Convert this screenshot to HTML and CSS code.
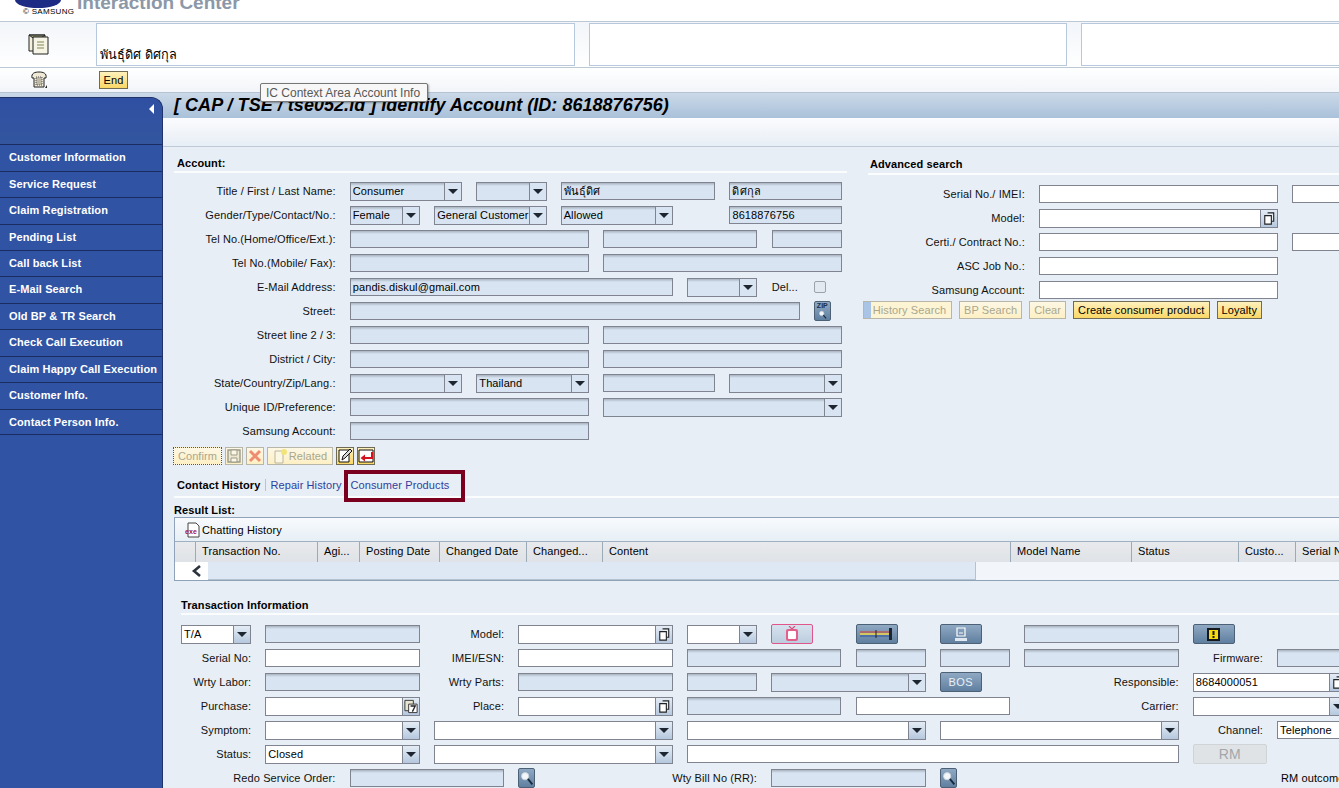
FILE: index.html
```html
<!DOCTYPE html>
<html lang="th">

<head>
    <meta charset="UTF-8">
    <title>Interaction Center</title>
    <link rel="stylesheet" href="styles.css">
</head>

<body>
    <!-- shared icons -->
    <svg class="defs" width="0" height="0">
        <symbol id="copy" viewBox="0 0 17 18">
            <path d="M7 3.5h6.5v9H11" fill="#e8eef5" stroke="#222" stroke-width="1.2"/>
            <path d="M4 6.5h7v9H4z" fill="#fff" stroke="#222" stroke-width="1.2"/>
        </symbol>
        <symbol id="find" viewBox="0 0 17 20">
            <circle cx="7" cy="8" r="4" fill="#f4f7fa" stroke="#c9d5e0"/>
            <path d="M10 11l5 6" stroke="#16283a" stroke-width="2"/>
        </symbol>
    </svg>

    <header class="masthead">
        <div class="logo">
            <svg class="logo-oval" width="50" height="8" viewBox="0 0 50 8"><ellipse cx="25" cy="0" rx="23" ry="8" fill="#1c2b83"/></svg>
            <span class="logo-name">© SAMSUNG</span>
        </div>
        <div class="app-name">Interaction Center</div>
    </header>

    <section class="context">
        <div class="context-icon">
            <svg width="22" height="21" viewBox="0 0 22 21">
                <path d="M1 1h16v16H1z" fill="#f4f1dc" stroke="#222"/>
                <path d="M1 1l8 6 8-6z" fill="#8f9171" stroke="#222"/>
                <path d="M5 3h15v17H5z" fill="#f6f4e4" stroke="#222"/>
                <path d="M9 8h7M9 11h7M9 14h7" stroke="#a9ab84" stroke-width="1.6"/>
            </svg>
        </div>
        <div class="context-box"><span>พันธุ์ดิศ ดิศกุล</span></div>
        <div class="context-box"></div>
        <div class="context-box"></div>
    </section>

    <section class="callbar">
        <div class="context-icon">
            <svg width="18" height="18" viewBox="0 0 18 18">
                <path d="M2 7C1 2 5 1 9 1s8 1 7 6l-2 0v9H4V7z" fill="#efe9d6" stroke="#222"/>
                <path d="M6 6h6v8H6z" fill="#bdb9a6" stroke="#555" stroke-dasharray="1 1"/>
                <path d="M15 17l2-3v3z" fill="#222"/>
            </svg>
        </div>
        <button class="btn end">End</button>
    </section>

    <div class="tooltip">IC Context Area Account Info</div>

    <div class="shell">
        <nav class="side">
            <div class="side-top"><i class="collapse"></i></div>
            <a>Customer Information</a>
            <a>Service Request</a>
            <a>Claim Registration</a>
            <a>Pending List</a>
            <a>Call back List</a>
            <a>E-Mail Search</a>
            <a>Old BP &amp; TR Search</a>
            <a>Check Call Execution</a>
            <a>Claim Happy Call Execution</a>
            <a>Customer Info.</a>
            <a>Contact Person Info.</a>
        </nav>

        <main class="content">
            <h1 class="title">[ CAP / TSE / tse052.id ] Identify Account (ID: 8618876756)</h1>
            <div class="band"></div>

            <div class="upper">
                <section class="account">
                    <h2 class="head">Account:</h2>
                    <div class="rows">
                        <div class="row">
                            <label class="lbl s4">Title / First / Last Name:</label>
                            <div class="fld ro sel s3">Consumer<i class="drop"></i></div>
                            <div class="fld ro sel s2"><i class="drop"></i></div>
                            <div class="fld ro s4">พันธุ์ดิศ</div>
                            <div class="fld ro s3">ดิศกุล</div>
                        </div>
                        <div class="row">
                            <label class="lbl s4">Gender/Type/Contact/No.:</label>
                            <div class="fld ro sel s2">Female<i class="drop"></i></div>
                            <div class="fld ro sel s3">General Customer<i class="drop"></i></div>
                            <div class="fld ro sel s3">Allowed<i class="drop"></i></div>
                            <i class="s1"></i>
                            <div class="fld ro s3">8618876756</div>
                        </div>
                        <div class="row">
                            <label class="lbl s4">Tel No.(Home/Office/Ext.):</label>
                            <div class="fld ro s6"></div>
                            <div class="fld ro s4"></div>
                            <div class="fld ro s2"></div>
                        </div>
                        <div class="row">
                            <label class="lbl s4">Tel No.(Mobile/ Fax):</label>
                            <div class="fld ro s6"></div>
                            <div class="fld ro s6"></div>
                        </div>
                        <div class="row">
                            <label class="lbl s4">E-Mail Address:</label>
                            <div class="fld ro s8">pandis.diskul@gmail.com</div>
                            <div class="fld ro sel s2"><i class="drop"></i></div>
                            <span class="del s1">Del...</span>
                            <i class="check s1"></i>
                        </div>
                        <div class="row">
                            <label class="lbl s4">Street:</label>
                            <div class="fld ro s11"></div>
                            <button class="ibtn zip s1">ZIP<svg width="13" height="11" viewBox="0 0 17 20"><use href="#find"/></svg></button>
                        </div>
                        <div class="row">
                            <label class="lbl s4">Street line 2 / 3:</label>
                            <div class="fld ro s6"></div>
                            <div class="fld ro s6"></div>
                        </div>
                        <div class="row">
                            <label class="lbl s4">District / City:</label>
                            <div class="fld ro s6"></div>
                            <div class="fld ro s6"></div>
                        </div>
                        <div class="row">
                            <label class="lbl s4">State/Country/Zip/Lang.:</label>
                            <div class="fld ro sel s3"><i class="drop"></i></div>
                            <div class="fld ro sel s3">Thailand<i class="drop"></i></div>
                            <div class="fld ro s3"></div>
                            <div class="fld ro sel s3"><i class="drop"></i></div>
                        </div>
                        <div class="row">
                            <label class="lbl s4">Unique ID/Preference:</label>
                            <div class="fld ro s6"></div>
                            <div class="fld ro sel s6"><i class="drop"></i></div>
                        </div>
                        <div class="row">
                            <label class="lbl s4">Samsung Account:</label>
                            <div class="fld ro s6"></div>
                        </div>
                    </div>
                </section>

                <section class="advanced">
                    <h2 class="head">Advanced search</h2>
                    <div class="rows">
                        <div class="row">
                            <label class="lbl s4">Serial No./ IMEI:</label>
                            <div class="fld s6"></div>
                            <div class="fld s6"></div>
                        </div>
                        <div class="row">
                            <label class="lbl s4">Model:</label>
                            <div class="fld sel s6"><i class="drop pick"><svg width="17" height="18"><use href="#copy"/></svg></i></div>
                        </div>
                        <div class="row">
                            <label class="lbl s4">Certi./ Contract No.:</label>
                            <div class="fld s6"></div>
                            <div class="fld s6"></div>
                        </div>
                        <div class="row">
                            <label class="lbl s4">ASC Job No.:</label>
                            <div class="fld s6"></div>
                        </div>
                        <div class="row">
                            <label class="lbl s4">Samsung Account:</label>
                            <div class="fld s6"></div>
                        </div>
                    </div>
                    <div class="adv-actions">
                        <button class="btn off hist">History Search</button>
                        <button class="btn off">BP Search</button>
                        <button class="btn off">Clear</button>
                        <button class="btn">Create consumer product</button>
                        <button class="btn">Loyalty</button>
                    </div>
                </section>
            </div>

            <div class="actions">
                <button class="btn off confirm">Confirm</button>
                <button class="btn off square">
                    <svg width="14" height="14" viewBox="0 0 14 14"><path d="M1 1h12v12H1z" fill="#ece8cf" stroke="#9b9b8c" stroke-width="1.4"/><path d="M4 1h6v5H4zM4 9h6v4H4z" fill="#fbf7e2" stroke="#9b9b8c"/></svg>
                </button>
                <button class="btn off square">
                    <svg width="14" height="14" viewBox="0 0 14 14"><path d="M2 2l10 10M12 2L2 12" stroke="#ee8d70" stroke-width="3"/></svg>
                </button>
                <button class="btn off related">
                    <svg width="16" height="16" viewBox="0 0 16 16"><path d="M2 3h8v12H2z" fill="#fbf7e2" stroke="#b9b69e"/><circle cx="11" cy="4" r="3" fill="#f3e47a"/></svg>Related
                </button>
                <button class="btn square">
                    <svg width="16" height="16" viewBox="0 0 16 16"><path d="M2 2h10v12H2z" fill="#fff" stroke="#111"/><path d="M5 12l1-4 7-7 2 2-7 7z" fill="#d9d9d9" stroke="#111"/></svg>
                </button>
                <button class="btn square">
                    <svg width="16" height="14" viewBox="0 0 16 14"><path d="M1 1h14v12H1z" fill="#fff" stroke="#111"/><path d="M13 3v5H7V5.5L2.500 9 7 12.500V10h8V3z" fill="#d6121f"/></svg>
                </button>
            </div>

            <div class="tabs">
                <a class="tab on">Contact History</a>
                <a class="tab">Repair History</a>
                <a class="tab third">Consumer Products</a>
                <span class="callout"></span>
            </div>

            <h3 class="result-title">Result List:</h3>
            <div class="result">
                <div class="result-tools">
                    <svg width="16" height="16" viewBox="0 0 16 16">
                        <path d="M3 1h8l3 3v11H3z" fill="#fff" stroke="#444"/>
                        <text x="0" y="12" class="exe">exe</text>
                    </svg>
                    Chatting History
                </div>
                <div class="cols">
                    <span></span>
                    <span>Transaction No.</span>
                    <span>Agi...</span>
                    <span>Posting Date</span>
                    <span>Changed Date</span>
                    <span>Changed...</span>
                    <span>Content</span>
                    <span>Model Name</span>
                    <span>Status</span>
                    <span>Custo...</span>
                    <span>Serial No</span>
                </div>
                <div class="scroll">
                    <span class="scroll-left">
                        <svg width="12" height="12" viewBox="0 0 12 12"><path d="M9 1L3 6l6 5" fill="none" stroke="#2c3440" stroke-width="2.600"/></svg>
                    </span>
                    <span class="scroll-track"></span>
                </div>
            </div>

            <section class="transaction">
                <h2 class="head">Transaction Information</h2>
                <div class="rows">
                    <div class="row">
                        <div class="fld sel s2">T/A<i class="drop"></i></div>
                        <div class="fld ro s4"></div>
                        <label class="lbl s2">Model:</label>
                        <div class="fld sel s4"><i class="drop pick"><svg width="17" height="18"><use href="#copy"/></svg></i></div>
                        <div class="fld sel s2"><i class="drop"></i></div>
                        <button class="ibtn wide tv s2">
                            <svg width="16" height="16" viewBox="0 0 16 16"><path d="M5 0l3 3 3-3" fill="none" stroke="#d9517f" stroke-width="1.200"/><rect x="2" y="3" width="12" height="12" rx="2" fill="#e4608c"/><rect x="4" y="5" width="8" height="8" rx="1" fill="#fff"/></svg>
                        </button>
                        <button class="ibtn wide s2">
                            <svg width="34" height="12" viewBox="0 0 34 12"><path d="M0 4h30" stroke="#d43c2c"/><path d="M0 6h30" stroke="#f2d84a" stroke-width="1.500"/><path d="M0 8h30" stroke="#2d4fa0"/><path d="M16 2v8" stroke="#222"/><path d="M29 0h3v12h-3z" fill="#1b2630"/></svg>
                        </button>
                        <button class="ibtn wide s2">
                            <svg width="14" height="15" viewBox="0 0 14 15"><path d="M3 1h8v8H3z" fill="none" stroke="#fff" stroke-width="1.200"/><path d="M5 6h4" stroke="#fff"/><path d="M1 11h12v3H1z" fill="#dfe8f0"/></svg>
                        </button>
                        <div class="fld ro s4"></div>
                        <button class="ibtn wide s2">
                            <svg width="13" height="13" viewBox="0 0 13 13"><path d="M0 0h13v13H0z" fill="#16181c"/><path d="M2 2h9v9H2z" fill="#f5d90a"/><path d="M5.500 3h2v4h-2zM5.500 8h2v2h-2z" fill="#16181c"/></svg>
                        </button>
                    </div>
                    <div class="row">
                        <label class="lbl s2">Serial No:</label>
                        <div class="fld s4"></div>
                        <label class="lbl s2">IMEI/ESN:</label>
                        <div class="fld s4"></div>
                        <div class="fld ro s4"></div>
                        <div class="fld ro s2"></div>
                        <div class="fld ro s2"></div>
                        <div class="fld ro s4"></div>
                        <label class="lbl s2">Firmware:</label>
                        <div class="fld ro s4"></div>
                    </div>
                    <div class="row">
                        <label class="lbl s2">Wrty Labor:</label>
                        <div class="fld ro s4"></div>
                        <label class="lbl s2">Wrty Parts:</label>
                        <div class="fld ro s4"></div>
                        <div class="fld ro s2"></div>
                        <div class="fld ro sel s4"><i class="drop"></i></div>
                        <button class="ibtn wide bos s2">BOS</button>
                        <label class="lbl s4">Responsible:</label>
                        <div class="fld sel s4">8684000051<i class="drop pick"><svg width="17" height="18"><use href="#copy"/></svg></i></div>
                    </div>
                    <div class="row">
                        <label class="lbl s2">Purchase:</label>
                        <div class="fld sel s4"><i class="drop pick">
                            <svg width="17" height="18" viewBox="0 0 17 18"><path d="M2 3h9v11H2z" fill="#e8e4d0" stroke="#333"/><path d="M6 7h9v9H6z" fill="#fff" stroke="#333"/><path d="M8 9h5l-3 6" fill="none" stroke="#222" stroke-width="1.400"/></svg>
                        </i></div>
                        <label class="lbl s2">Place:</label>
                        <div class="fld sel s4"><i class="drop pick"><svg width="17" height="18"><use href="#copy"/></svg></i></div>
                        <div class="fld ro s4"></div>
                        <div class="fld s4"></div>
                        <label class="lbl s4">Carrier:</label>
                        <div class="fld sel s4"><i class="drop"></i></div>
                    </div>
                    <div class="row">
                        <label class="lbl s2">Symptom:</label>
                        <div class="fld sel s4"><i class="drop"></i></div>
                        <div class="fld sel s6"><i class="drop"></i></div>
                        <div class="fld sel s6"><i class="drop"></i></div>
                        <div class="fld sel s6"><i class="drop"></i></div>
                        <label class="lbl s2">Channel:</label>
                        <div class="fld s4">Telephone</div>
                    </div>
                    <div class="row">
                        <label class="lbl s2">Status:</label>
                        <div class="fld sel s4">Closed<i class="drop"></i></div>
                        <div class="fld sel s6"><i class="drop"></i></div>
                        <div class="fld s12"></div>
                        <button class="rm s2">RM</button>
                    </div>
                    <div class="row">
                        <label class="lbl s4">Redo Service Order:</label>
                        <div class="fld ro s4"></div>
                        <button class="ibtn s1 lens"><svg width="17" height="20"><use href="#find"/></svg></button>
                        <i class="s3"></i>
                        <label class="lbl s2">Wty Bill No (RR):</label>
                        <div class="fld ro s4"></div>
                        <button class="ibtn s1 lens"><svg width="17" height="20"><use href="#find"/></svg></button>
                        <i class="s7"></i>
                        <label class="lbl-left s4">RM outcome</label>
                    </div>
                </div>
            </section>
        </main>
    </div>
</body>

</html>
```

FILE: styles.css
```css
/* General styles */
* {
    box-sizing: border-box;
    margin: 0;
    padding: 0;
}

:root {
    --page: #e7eef5;
    --field: #d8e4f2;
    --line: #7f8490;
    --navy: #3153a4;
}

html, body {
    width: 1339px;
    height: 788px;
    overflow: hidden;
}

body {
    position: relative;
    background: #fff;
    color: #000;
    font-family: "Liberation Sans", Arial, "Noto Sans", sans-serif;
    font-size: 11px;
    letter-spacing: 0.1px;
}

.defs {
    position: absolute;
}

/* Top of the page */
.masthead {
    display: flex;
    height: 22px;
    overflow: hidden;
    border-bottom: 1px solid #bcc8d4;
}

.logo {
    display: flex;
    flex-direction: column;
    width: 77px;
    padding-left: 13px;
}

.logo-oval {
    display: block;
    flex: none;
}

.logo-name {
    padding: 0 0 0 10px;
    font-size: 8px;
    letter-spacing: 0.3px;
    white-space: nowrap;
    line-height: 8px;
}

.app-name {
    margin-top: -8px;
    color: #8c98a8;
    font-size: 19px;
    font-weight: bold;
    letter-spacing: 0;
    line-height: 22px;
    white-space: nowrap;
}

.context {
    display: flex;
    gap: 14px;
    height: 46px;
    padding: 1px 0 1px 0;
    background: linear-gradient(#f2f5f9, #fff);
    border-bottom: 1px solid #bcc8d4;
}

.context-icon {
    display: flex;
    align-items: center;
    justify-content: center;
    flex: none;
    width: 82px;
    padding-right: 4px;
}

.context-box {
    display: flex;
    align-items: flex-end;
    flex: none;
    width: 478.5px;
    padding: 0 3px;
    background: #fff;
    border: 1px solid #b7c8dc;
    font-size: 12.7px;
    letter-spacing: 0;
}

.callbar {
    display: flex;
    align-items: center;
    gap: 17px;
    height: 24px;
    background: linear-gradient(#fff, #f2f5f9);
}

.tooltip {
    position: absolute;
    top: 83px;
    left: 260px;
    z-index: 5;
    width: 168px;
    height: 19px;
    padding-left: 5px;
    background: #f7f7f7;
    border: 1px solid #767676;
    border-radius: 2px;
    box-shadow: 1px 1px 2px rgba(0, 0, 0, 0.35);
    color: #575757;
    font-size: 12px;
    letter-spacing: 0;
    line-height: 19px;
    white-space: nowrap;
}

/* Sidebar and content */
.shell {
    display: flex;
    height: 696px;
    background: linear-gradient(#cbd9e8, #a8c0d9) 0 0 / 100% 26px no-repeat, var(--page);
    border-top: 1px solid #b5c3d2;
}

.side {
    flex: none;
    width: 163px;
    margin-top: 4px;
    background: var(--navy);
    border-top: 1px solid #1f3269;
    border-right: 1px solid #1f3269;
    border-top-right-radius: 12px;
}

.side-top {
    display: flex;
    justify-content: flex-end;
    height: 46.3px;
    padding: 6px 8px 0 0;
    background: linear-gradient(#2f50a2, #33569f);
    border-top-right-radius: 12px;
}

.collapse {
    width: 0;
    height: 0;
    border-top: 5px solid transparent;
    border-bottom: 5px solid transparent;
    border-right: 5px solid #fff;
}

.side a {
    display: block;
    height: 26.45px;
    padding-left: 9px;
    border-top: 1px solid #1b2c60;
    color: #fff;
    font-size: 11px;
    font-weight: bold;
    line-height: 25px;
    white-space: nowrap;
}

.side a:last-child {
    border-bottom: 1px solid #1b2c60;
}

.content {
    flex: 1;
    min-width: 0;
    overflow: hidden;
}

.title {
    height: 25px;
    padding-left: 11px;
    font-size: 18px;
    font-style: italic;
    font-weight: bold;
    letter-spacing: 0.035px;
    line-height: 24px;
    white-space: nowrap;
}

.band {
    height: 29px;
    background: linear-gradient(#fbfcfe, #e7eef5);
    border-bottom: 1px solid #bfcad6;
}

.upper {
    display: flex;
}

.account {
    flex: none;
    width: 684px;
    padding-left: 11px;
}

.advanced {
    flex: none;
    width: 492px;
    margin-left: 16px;
    padding-left: 5px;
}

.head {
    height: 26px;
    padding: 10px 0 0 3px;
    border-bottom: 2px solid #fbfcfd;
    font-size: 11px;
    font-weight: bold;
    line-height: 13px;
    white-space: nowrap;
}

.rows {
    margin: 6px 0 0 7px;
}

.advanced .head {
    height: 28px;
    padding: 11px 0 0 2px;
}

.advanced .rows {
    margin: 7px 0 0 2.400px;
}

/* Every form row sits on one grid of 28px tracks */
.row {
    display: grid;
    grid-template-columns: repeat(30, 28px);
    column-gap: 14.17px;
    align-items: center;
    height: 24px;
}

.account .row {
    column-gap: 14.2px;
}

.advanced .row {
    column-gap: 14.15px;
}

.s1 { grid-column: span 1; }
.s2 { grid-column: span 2; }
.s3 { grid-column: span 3; }
.s4 { grid-column: span 4; }
.s6 { grid-column: span 6; }
.s7 { grid-column: span 7; }
.s8 { grid-column: span 8; }
.s11 { grid-column: span 11; }
.s12 { grid-column: span 12; }

.lbl {
    display: flex;
    justify-content: flex-end;
    color: #111;
    white-space: nowrap;
}

.lbl-left {
    padding-left: 4px;
    white-space: nowrap;
}

.fld {
    position: relative;
    height: 18px;
    padding-left: 2px;
    overflow: hidden;
    background: #fff;
    border: 1px solid var(--line);
    line-height: 16px;
    white-space: nowrap;
}

.fld.ro {
    background: linear-gradient(#aab4c0, #d8e4f2 3px);
}

.fld.sel {
    height: 19px;
    padding-right: 18px;
    line-height: 17px;
}

/* Arrow part of a dropdown */
.drop {
    position: absolute;
    top: 0;
    right: 0;
    display: flex;
    align-items: center;
    justify-content: center;
    width: 17px;
    height: 17px;
    background: linear-gradient(#e4ecf5, #b6c8de);
    border-left: 1px solid var(--line);
}

.drop::after {
    content: "";
    width: 0;
    height: 0;
    border-top: 5px solid #1c2530;
    border-left: 5px solid transparent;
    border-right: 5px solid transparent;
}

.ro .drop {
    background: var(--field);
}

.drop.pick::after {
    display: none;
}

.del {
    color: #111;
    white-space: nowrap;
}

.check {
    width: 12px;
    height: 12px;
    background: #e2e9f1;
    border: 1px solid #9aa2ac;
    border-radius: 2px;
}

/* Button styles */
.btn {
    display: inline-flex;
    align-items: center;
    justify-content: center;
    height: 18px;
    padding: 0 4px;
    background: linear-gradient(#fff1bd, #fad765);
    border: 1px solid #6f6b55;
    color: #000;
    font-family: inherit;
    font-size: 11px;
    letter-spacing: inherit;
    white-space: nowrap;
}

.btn.off {
    background: linear-gradient(#fdf8e4, #fdf0c4);
    border-color: #b7b6a8;
    color: #a9a78f;
}

.btn.end {
    width: 29px;
    height: 18px;
    padding: 0;
}

.btn.hist {
    width: 89px;
    padding-left: 8px;
    background: linear-gradient(90deg, #a9c4e4 7px, #fdf4d4 7px);
}

.btn.square {
    width: 18px;
    height: 18px;
    padding: 0;
}

.btn.confirm {
    width: 49px;
    height: 18px;
    border-style: dotted;
    border-color: #57564c;
}

.btn.related {
    width: 66px;
    height: 18px;
    padding: 0;
}

.adv-actions {
    display: flex;
    gap: 7px;
    margin: -1px 0 0 -5px;
}

.ibtn {
    display: flex;
    flex-direction: column;
    align-items: center;
    justify-content: center;
    height: 20px;
    background: linear-gradient(#8fa9c3, #607f9f);
    border: 1px solid #4c6076;
    border-radius: 2px;
    color: #e9f0f6;
    font-family: inherit;
}

.ibtn.wide {
    width: 42px;
}

.ibtn.lens {
    width: 17px;
}

.ibtn.zip {
    width: 17px;
    font-size: 7px;
    font-weight: bold;
    line-height: 7px;
    color: #1f2f45;
}

.ibtn.tv {
    background: linear-gradient(#d6e2ee, #bccddf);
    border-color: #e0558a;
}

.ibtn.bos {
    font-size: 11px;
    letter-spacing: 0.5px;
}

.rm {
    width: 74px;
    height: 20px;
    background: #dfe3e6;
    border: 1px solid #cfd4d8;
    border-radius: 2px;
    color: #a2a7ab;
    font-family: inherit;
    font-size: 14px;
}

.actions {
    display: flex;
    gap: 3px;
    height: 20px;
    margin-top: 3px;
    padding: 1px 0 0 10px;
}

/* Tabs */
.tabs {
    position: relative;
    display: flex;
    align-items: center;
    gap: 4px;
    height: 32px;
    margin: 0 0 0 11px;
    padding: 8px 0 0 3px;
    border-bottom: 2px solid #fbfcfd;
}

.tab {
    color: #2f3f9f;
    white-space: nowrap;
}

.tab.on {
    padding-right: 5px;
    border-right: 1px solid #b9c3cf;
    color: #000;
    font-weight: bold;
}

.tab.third {
    margin-left: 5px;
}

.callout {
    position: absolute;
    top: 4px;
    left: 170px;
    width: 121px;
    height: 32px;
    border: 4px solid #7b0020;
}

.result-title {
    height: 19px;
    padding-left: 11px;
    font-size: 11px;
    line-height: 25px;
}

/* Result list */
.result {
    height: 64px;
    margin-left: 11px;
    background: #f2f6fa;
    border-top: 1px solid #8ea3b7;
    border-left: 1px solid #8ea3b7;
    border-bottom: 1px solid #8ea3b7;
}

.result-tools {
    display: flex;
    align-items: center;
    gap: 1px;
    height: 24px;
    padding-left: 10px;
    background: linear-gradient(#f8fafd, #e6eff5);
    border-bottom: 1px solid #9fb0c0;
}

.exe {
    fill: #a01050;
    font-family: "Liberation Sans", sans-serif;
    font-size: 7px;
    font-weight: bold;
}

.cols {
    display: grid;
    grid-template-columns: 21px 122px 42px 80px 87px 76px 408px 121px 107px 57px 80px;
    height: 20px;
    background: linear-gradient(#e8eaed, #dfe2e6);
}

.cols span {
    padding-left: 6px;
    border-right: 1px solid #9ca9b7;
    line-height: 19px;
    white-space: nowrap;
    overflow: hidden;
}

.scroll {
    display: flex;
    height: 18px;
}

.scroll-left {
    display: flex;
    align-items: center;
    justify-content: center;
    width: 33px;
    padding-left: 10px;
    background: #fff;
}

.scroll-track {
    width: 768px;
    background: #dde8f4;
    border-right: 1px solid #b5c1ce;
    border-bottom: 1px solid #b5c1ce;
}

/* Transaction form */
.transaction {
    padding: 16px 0 0 18px;
}

.transaction .head {
    height: 18px;
    padding: 2px 0 0 0;
}

.transaction .rows {
    margin: 7px 0 0 0;
}
```
